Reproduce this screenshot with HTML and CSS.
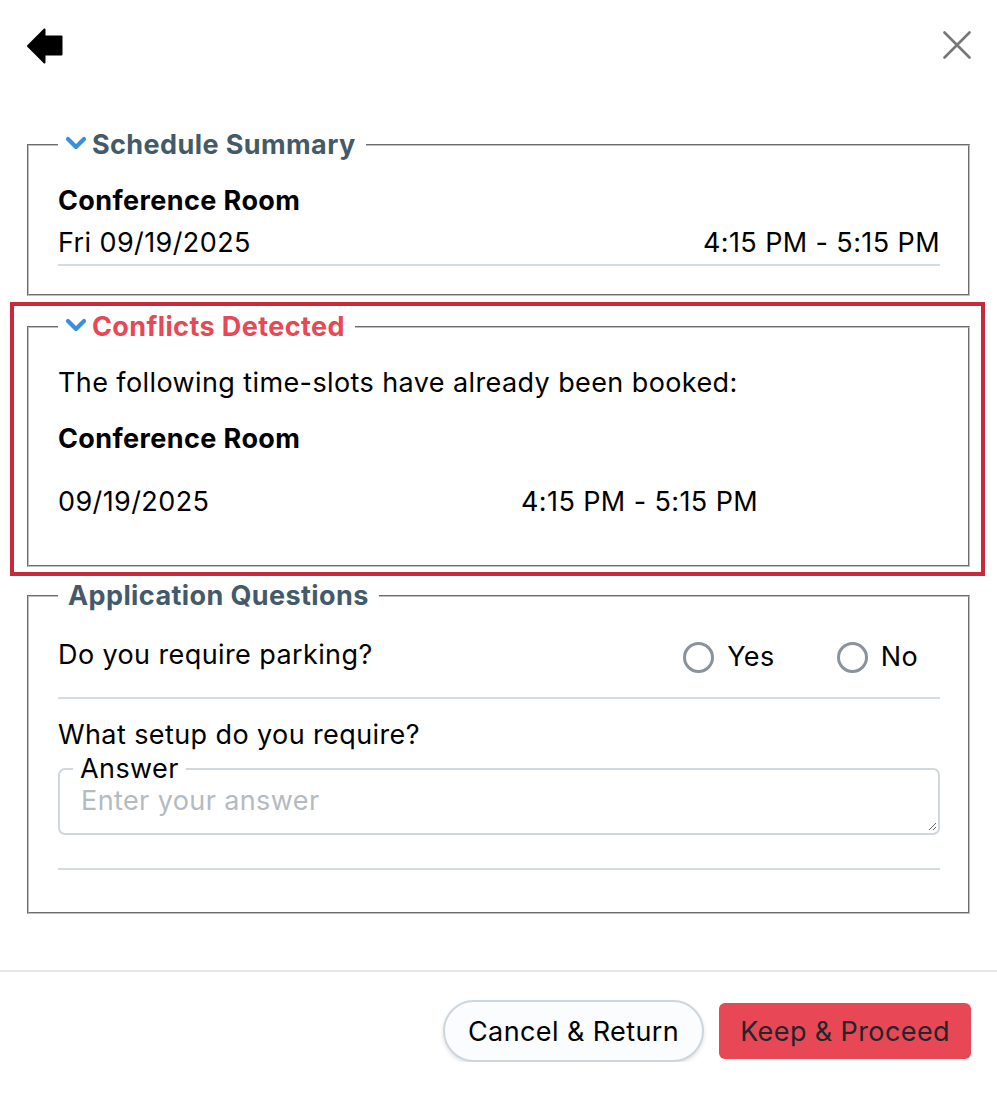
FILE: index.html
```html
<!DOCTYPE html>
<html lang="en">
<head>
<meta charset="utf-8">
<title>Conflicts</title>
<link rel="stylesheet" href="styles.css">
</head>
<body>
<div class="page">
  <div class="topbar">
    <button class="icon-btn back" aria-label="Back">
      <svg width="36" height="36" viewBox="0 0 36 36"><path d="M1 18 L17.5 1.5 L17.5 8.5 L34.5 8.5 L34.5 26.5 L17.5 26.5 L17.5 34.5 Z" fill="#000" stroke="#000" stroke-width="2" stroke-linejoin="round"/></svg>
    </button>
    <button class="icon-btn close" aria-label="Close">
      <svg width="28" height="28" viewBox="0 0 28 28"><path d="M1.5 1.5 L26.5 26.5 M26.5 1.5 L1.5 26.5" stroke="#777" stroke-width="2.6" stroke-linecap="round"/></svg>
    </button>
  </div>

  <fieldset class="section summary">
    <legend class="sec-legend"><svg class="chev" width="22" height="14" viewBox="0 0 22 14"><path d="M3 3 L11 11 L19 3" fill="none" stroke="#3a8fdc" stroke-width="4.2" stroke-linecap="round" stroke-linejoin="round"/></svg><span class="legend-text slate">Schedule Summary</span></legend>
    <div class="bold-line first">Conference Room</div>
    <div class="summary-row">
      <span>Fri 09/19/2025</span>
      <span>4:15 PM - 5:15 PM</span>
    </div>
  </fieldset>

  <div class="conflict-wrap">
    <fieldset class="section conflicts">
      <legend class="sec-legend"><svg class="chev" width="22" height="14" viewBox="0 0 22 14"><path d="M3 3 L11 11 L19 3" fill="none" stroke="#3a8fdc" stroke-width="4.2" stroke-linecap="round" stroke-linejoin="round"/></svg><span class="legend-text red">Conflicts Detected</span></legend>
      <div class="line intro">The following time-slots have already been booked:</div>
      <div class="bold-line room">Conference Room</div>
      <div class="conflict-row">
        <span>09/19/2025</span>
        <span>4:15 PM - 5:15 PM</span>
      </div>
    </fieldset>
  </div>

  <fieldset class="section questions">
    <legend class="sec-legend plain"><span class="legend-text slate">Application Questions</span></legend>
    <div class="q-row">
      <span class="q-text">Do you require parking?</span>
      <div class="radios">
        <label class="radio"><span class="circle"></span><span>Yes</span></label>
        <label class="radio"><span class="circle"></span><span>No</span></label>
      </div>
    </div>
    <div class="q-text setup">What setup do you require?</div>
    <fieldset class="answer">
      <legend class="answer-legend">Answer</legend>
      <textarea class="answer-input" placeholder="Enter your answer"></textarea>
    </fieldset>
    <div class="q-divider"></div>
  </fieldset>
</div>

<div class="footer">
  <button class="btn cancel">Cancel &amp; Return</button>
  <button class="btn proceed">Keep &amp; Proceed</button>
</div>
</body>
</html>
```

FILE: styles.css
```css
* { box-sizing: border-box; }

body {
  margin: 0;
  background: #fff;
  font-family: Inter, "Noto Sans", "Liberation Sans", sans-serif;
  font-size: 27px;
  letter-spacing: 0.4px;
  color: #000;
}

.page {
  padding: 28px 27px 0 27px;
}

.topbar {
  display: flex;
  justify-content: space-between;
  align-items: flex-start;
  height: 36px;
}

.icon-btn {
  background: none;
  border: 0;
  padding: 0;
  margin: 0;
  display: block;
  line-height: 0;
}

.close {
  margin-top: 3px;
  margin-right: -1px;
}

.section {
  margin: 0;
  border: 2px groove #c0c0c0;
  padding: 0 28px 0 29px;
}

.summary {
  margin-top: 65px;
  padding-bottom: 28px;
}

.sec-legend {
  padding: 0 10px 0 7px;
  line-height: 32px;
  height: 32px;
  display: flex;
  align-items: center;
}

.sec-legend.plain {
  padding: 0 10px;
}

.chev {
  display: block;
  margin-top: -5px;
  margin-right: 5px;
}

.legend-text {
  font-weight: 700;
  font-size: 27px;
}

.slate { color: #455a68; }
.red { color: #e84855; }

.bold-line {
  font-weight: 700;
  line-height: 36px;
}

.first { margin-top: 22px; }

.summary-row {
  display: flex;
  justify-content: space-between;
  line-height: 36px;
  margin-top: 6px;
  padding-bottom: 3px;
  border-bottom: 2px solid #d3dce2;
}

.conflict-wrap {
  margin: 6px -15px 0 -17px;
  border: 4px solid #c92a3b;
  padding: 5px 11px 5px 13px;
}

.conflicts {
  padding-bottom: 45px;
}

.line { line-height: 36px; }

.intro { margin-top: 22px; }

.room { margin-top: 20px; }

.conflict-row {
  display: grid;
  grid-template-columns: 463px auto;
  justify-content: start;
  line-height: 36px;
  margin-top: 27px;
}

.questions {
  margin-top: 4px;
  padding-bottom: 42px;
}

.q-row {
  display: flex;
  justify-content: space-between;
  align-items: center;
  margin-top: 23px;
  padding-bottom: 22px;
  border-bottom: 2px solid #d3dce2;
}

.q-text { line-height: 36px; }

.radios {
  display: flex;
  gap: 62px;
  margin-right: 22px;
  margin-top: 4px;
}

.radio {
  display: flex;
  align-items: center;
  gap: 13px;
  line-height: 36px;
}

.circle {
  width: 31px;
  height: 31px;
  border: 3px solid #8a939b;
  border-radius: 50%;
  background: #fff;
}

.setup { margin-top: 18px; }

.answer {
  margin: 1px 0 0 0;
  border: 2px solid #d0d7dd;
  border-radius: 7px;
  padding: 0 1px 0 13px;
  height: 81px;
}

.answer-legend {
  padding: 0 7px;
  line-height: 30px;
  height: 30px;
  font-size: 27px;
  color: #000;
}

.answer-input {
  display: block;
  width: 100%;
  height: 47px;
  border: 0;
  outline: none;
  resize: both;
  padding: 0 0 0 8px;
  margin: 0;
  font-family: inherit;
  font-size: 27px;
  letter-spacing: 0.4px;
  line-height: 34px;
  color: #000;
  background: transparent;
}

.answer-input::placeholder {
  color: #b3bbc1;
}

.q-divider {
  margin-top: 33px;
  border-bottom: 2px solid #d3dce2;
}

.footer {
  margin-top: 56px;
  border-top: 2px solid #e4e7ea;
  display: flex;
  justify-content: flex-end;
  align-items: center;
  gap: 15px;
  padding: 28px 26px 0 0;
}

.btn {
  font-family: inherit;
  font-size: 27px;
  letter-spacing: 0.4px;
  margin: 0;
  cursor: pointer;
}

.cancel {
  height: 62px;
  padding: 0 23px;
  border-radius: 31px;
  border: 2px solid #ccd6de;
  background: #fafcfd;
  color: #000;
  box-shadow: 0 2px 4px rgba(0, 0, 0, 0.12);
}

.proceed {
  height: 56px;
  padding: 0 21px;
  border-radius: 6px;
  border: 0;
  background: #e84855;
  color: #23252a;
}
```
